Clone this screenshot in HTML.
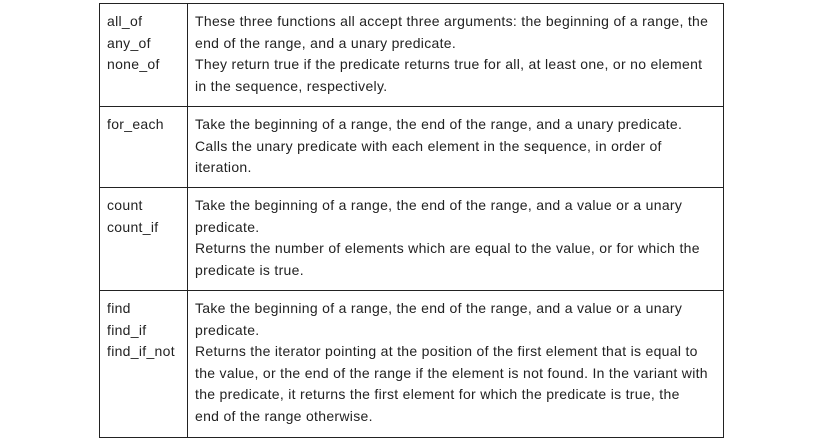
<!DOCTYPE html>
<html><head><style>
body{margin:0;background:#fff;width:823px;height:441px;overflow:hidden}
table{position:absolute;left:99px;top:3px;border-collapse:collapse;font-family:"Liberation Sans",sans-serif;font-size:14px;letter-spacing:0.3px;color:#222;line-height:21.5px}
td{border:1px solid #222;vertical-align:top;padding:7px 6px 0 7px;white-space:nowrap}
td.a{width:74px}
td.b{width:522px}
</style></head><body>
<table>
<tr style="height:103px"><td class="a">all_of<br>any_of<br>none_of</td><td class="b">These three functions all accept three arguments: the beginning of a range, the<br>end of the range, and a unary predicate.<br>They return true if the predicate returns true for all, at least one, or no element<br>in the sequence, respectively.</td></tr>
<tr style="height:81px"><td class="a">for_each</td><td class="b">Take the beginning of a range, the end of the range, and a unary predicate.<br>Calls the unary predicate with each element in the sequence, in order of<br>iteration.</td></tr>
<tr style="height:103px"><td class="a">count<br>count_if</td><td class="b">Take the beginning of a range, the end of the range, and a value or a unary<br>predicate.<br>Returns the number of elements which are equal to the value, or for which the<br>predicate is true.</td></tr>
<tr style="height:147px"><td class="a">find<br>find_if<br>find_if_not</td><td class="b">Take the beginning of a range, the end of the range, and a value or a unary<br>predicate.<br>Returns the iterator pointing at the position of the first element that is equal to<br>the value, or the end of the range if the element is not found. In the variant with<br>the predicate, it returns the first element for which the predicate is true, the<br>end of the range otherwise.</td></tr>
</table>
</body></html>
